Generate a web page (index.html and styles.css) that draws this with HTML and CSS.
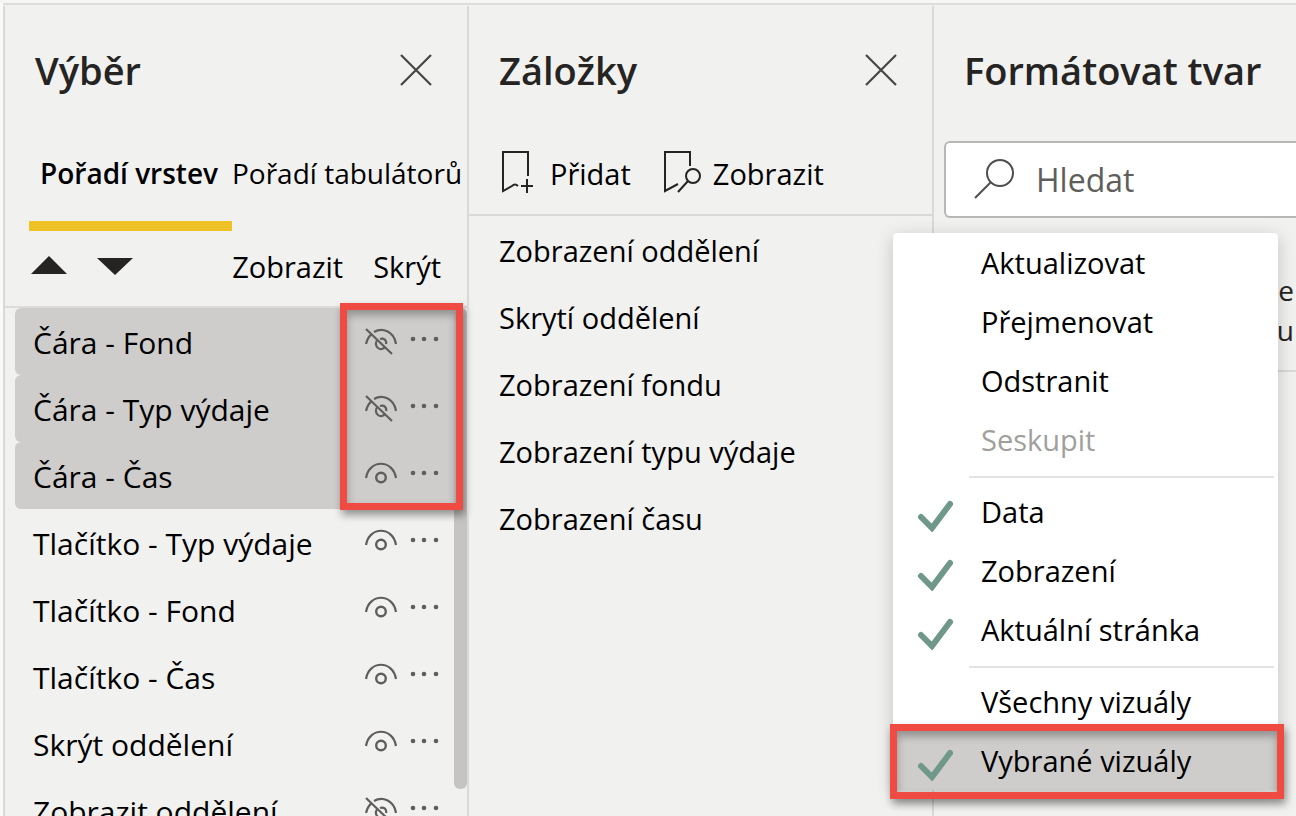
FILE: index.html
```html
<!DOCTYPE html>
<html lang="cs">
<head>
    <meta charset="UTF-8">
    <meta name="viewport" content="width=device-width, initial-scale=1.0">
    <title>Výběr a záložky</title>
    <link rel="stylesheet" href="styles.css">
</head>
<body>
    <!-- sdílené ikony -->
    <svg class="sprite" aria-hidden="true">
        <symbol id="close" viewBox="0 0 32 32">
            <path d="M1 1 31 31M31 1 1 31" fill="none" stroke="currentColor" stroke-width="2.2"/>
        </symbol>
        <symbol id="eye" viewBox="0 0 32 28">
            <path d="M1 16C4 -3 28 -3 31 16" fill="none" stroke="currentColor" stroke-width="2.2"/>
            <circle cx="16" cy="15.500" r="4.800" fill="none" stroke="currentColor" stroke-width="2.4"/>
        </symbol>
        <symbol id="eye-off" viewBox="0 0 32 28">
            <path d="M1 16C2 12 4 8 7 6M9 4C17 -1 29 3 31 16" fill="none" stroke="currentColor" stroke-width="2.2"/>
            <path d="M12.500 12C10 14 10.500 18 13 20S18.500 21 20 19M15 11C19 9.500 22 12.500 21 16" fill="none" stroke="currentColor" stroke-width="2.2"/>
            <path d="M1 1 27 26" fill="none" stroke="currentColor" stroke-width="2.2"/>
        </symbol>
        <symbol id="dots" viewBox="0 0 30 6">
            <circle cx="4" cy="3" r="2.3" fill="currentColor"/>
            <circle cx="15" cy="3" r="2.3" fill="currentColor"/>
            <circle cx="27" cy="3" r="2.3" fill="currentColor"/>
        </symbol>
        <symbol id="check" viewBox="0 0 36 32">
            <path d="M4 17 15 28 33 4" fill="none" stroke="currentColor" stroke-width="6" stroke-linecap="round"/>
        </symbol>
    </svg>

    <div class="workspace">
        <div class="canvas-edge"></div>

        <section class="panel">
            <header class="panel-header">
                <h2>Výběr</h2>
                <button type="button" class="icon-btn" aria-label="Zavřít"><svg class="icon-close"><use href="#close"/></svg></button>
            </header>
            <div class="tabs" role="tablist">
                <button type="button" role="tab" class="tab active" aria-selected="true">Pořadí vrstev</button>
                <button type="button" role="tab" class="tab" aria-selected="false">Pořadí tabulátorů</button>
            </div>
            <div class="layer-tools">
                <button type="button" class="icon-btn" aria-label="Nahoru"><svg class="icon-arrow" viewBox="0 0 36 20"><path d="M0 19 18 1 36 19Z"/></svg></button>
                <button type="button" class="icon-btn" aria-label="Dolů"><svg class="icon-arrow" viewBox="0 0 36 20"><path d="M0 3H36L18 20Z"/></svg></button>
                <button type="button" class="text-btn push">Zobrazit</button>
                <button type="button" class="text-btn">Skrýt</button>
            </div>
            <div class="layers">
                <ul class="layer-list">
                    <li class="layer selected"><span>Čára - Fond</span><button type="button" class="icon-btn" aria-label="Zobrazit"><svg class="icon-eye"><use href="#eye-off"/></svg></button><button type="button" class="icon-btn" aria-label="Další"><svg class="icon-dots"><use href="#dots"/></svg></button></li>
                    <li class="layer selected"><span>Čára - Typ výdaje</span><button type="button" class="icon-btn" aria-label="Zobrazit"><svg class="icon-eye"><use href="#eye-off"/></svg></button><button type="button" class="icon-btn" aria-label="Další"><svg class="icon-dots"><use href="#dots"/></svg></button></li>
                    <li class="layer selected"><span>Čára - Čas</span><button type="button" class="icon-btn" aria-label="Skrýt"><svg class="icon-eye"><use href="#eye"/></svg></button><button type="button" class="icon-btn" aria-label="Další"><svg class="icon-dots"><use href="#dots"/></svg></button></li>
                    <li class="layer"><span>Tlačítko - Typ výdaje</span><button type="button" class="icon-btn" aria-label="Skrýt"><svg class="icon-eye"><use href="#eye"/></svg></button><button type="button" class="icon-btn" aria-label="Další"><svg class="icon-dots"><use href="#dots"/></svg></button></li>
                    <li class="layer"><span>Tlačítko - Fond</span><button type="button" class="icon-btn" aria-label="Skrýt"><svg class="icon-eye"><use href="#eye"/></svg></button><button type="button" class="icon-btn" aria-label="Další"><svg class="icon-dots"><use href="#dots"/></svg></button></li>
                    <li class="layer"><span>Tlačítko - Čas</span><button type="button" class="icon-btn" aria-label="Skrýt"><svg class="icon-eye"><use href="#eye"/></svg></button><button type="button" class="icon-btn" aria-label="Další"><svg class="icon-dots"><use href="#dots"/></svg></button></li>
                    <li class="layer"><span>Skrýt oddělení</span><button type="button" class="icon-btn" aria-label="Skrýt"><svg class="icon-eye"><use href="#eye"/></svg></button><button type="button" class="icon-btn" aria-label="Další"><svg class="icon-dots"><use href="#dots"/></svg></button></li>
                    <li class="layer"><span>Zobrazit oddělení</span><button type="button" class="icon-btn" aria-label="Zobrazit"><svg class="icon-eye"><use href="#eye-off"/></svg></button><button type="button" class="icon-btn" aria-label="Další"><svg class="icon-dots"><use href="#dots"/></svg></button></li>
                </ul>
                <div class="scroll-thumb"></div>
                <div class="highlight highlight-eyes"></div>
            </div>
        </section>

        <section class="panel">
            <header class="panel-header">
                <h2>Záložky</h2>
                <button type="button" class="icon-btn" aria-label="Zavřít"><svg class="icon-close"><use href="#close"/></svg></button>
            </header>
            <div class="bookmark-tools">
                <button type="button" class="text-btn">
                    <svg class="icon-bookmark" viewBox="0 0 38 44"><path d="M28 26V2H3V41L12 36Q15 33 18 36M27 29V43M21 36H33"/></svg>
                    Přidat
                </button>
                <button type="button" class="text-btn">
                    <svg class="icon-bookmark" viewBox="0 0 38 44"><path d="M27 16V2H2V41L15 34M25 31 15 42"/><circle cx="30" cy="26" r="7"/></svg>
                    Zobrazit
                </button>
            </div>
            <ul class="bookmark-list">
                <li>Zobrazení oddělení</li>
                <li>Skrytí oddělení</li>
                <li>Zobrazení fondu</li>
                <li>Zobrazení typu výdaje</li>
                <li>Zobrazení času</li>
            </ul>
        </section>

        <section class="panel format-panel">
            <header class="panel-header">
                <h2>Formátovat tvar</h2>
            </header>
            <label class="search">
                <svg class="icon-search" viewBox="0 0 42 42"><circle cx="26" cy="14" r="13"/><path d="M17 23 1 39"/></svg>
                <input type="text" placeholder="Hledat" aria-label="Hledat">
            </label>
            <p class="format-hint">e<br>u</p>

            <div class="menu" role="menu">
                <button type="button" role="menuitem">Aktualizovat</button>
                <button type="button" role="menuitem">Přejmenovat</button>
                <button type="button" role="menuitem">Odstranit</button>
                <button type="button" role="menuitem" disabled>Seskupit</button>
                <hr>
                <button type="button" role="menuitemcheckbox" aria-checked="true"><svg class="icon-check"><use href="#check"/></svg>Data</button>
                <button type="button" role="menuitemcheckbox" aria-checked="true"><svg class="icon-check"><use href="#check"/></svg>Zobrazení</button>
                <button type="button" role="menuitemcheckbox" aria-checked="true"><svg class="icon-check"><use href="#check"/></svg>Aktuální stránka</button>
                <hr>
                <button type="button" role="menuitemradio" aria-checked="false">Všechny vizuály</button>
                <button type="button" role="menuitemradio" aria-checked="true" class="current"><svg class="icon-check"><use href="#check"/></svg>Vybrané vizuály</button>
                <div class="highlight highlight-item"></div>
            </div>
        </section>
    </div>
</body>
</html>
```
FILE: styles.css
```css
* {
    box-sizing: border-box;
}

body {
    margin: 0;
    height: 100vh;
    overflow: hidden;
    background-color: #f1f1ef;
    color: #000;
    font-family: "Segoe UI", "Open Sans", "Noto Sans", sans-serif;
    font-size: 29px;
    line-height: 40px;
}

h2, p, ul {
    margin: 0;
    padding: 0;
}

ul {
    list-style: none;
}

button {
    padding: 0;
    border: none;
    background: none;
    color: inherit;
    font: inherit;
    white-space: nowrap;
    cursor: pointer;
}

svg {
    display: block;
    flex: none;
}

.sprite {
    position: absolute;
    width: 0;
    height: 0;
}

.workspace {
    display: grid;
    grid-template-columns: 3px 464fr 465fr 364fr;
    height: 100%;
    border-top: 3px solid #f6f6f5;
    box-shadow: inset 0 2px 0 #dddddb;
}

.canvas-edge {
    background-color: #fafaf9;
}

.panel {
    position: relative;
    min-width: 0;
    padding-top: 27px;
    border-left: 2px solid #d9d9d7;
    margin-top: 3px;
}

.panel-header {
    display: flex;
    align-items: center;
    justify-content: space-between;
    height: 73px;
    padding: 0 35px 0 30px;
}

.panel-header h2 {
    color: #252423;
    font-size: 38px;
    font-weight: 600;
    line-height: 48px;
    white-space: nowrap;
}

.icon-close {
    width: 32px;
    height: 32px;
    color: #484644;
}

/* Výběr */

.tabs {
    display: flex;
    height: 125px;
    padding-left: 24px;
}

.tab {
    padding: 18px 0 0;
    border-bottom: 10px solid transparent;
    font-size: 28px;
}

.tab.active {
    padding: 18px 14px 0 11px;
    border-color: #efc228;
    font-weight: 600;
}

.layer-tools {
    display: flex;
    align-items: center;
    gap: 30px;
    height: 77px;
    padding: 0 26px 4px;
    border-bottom: 2px solid #dbdbd9;
}

.icon-arrow {
    width: 36px;
    height: 20px;
    margin-bottom: 4px;
    fill: #252423;
}

.push {
    margin-left: auto;
}

.layers {
    position: relative;
}

.layer-list {
    padding-left: 10px;
}

.layer {
    display: flex;
    align-items: center;
    height: 67px;
    padding: 0 28px 0 18px;
    border-radius: 6px;
    font-size: 30px;
}

.layer span {
    flex: 1;
    padding-top: 2px;
    white-space: nowrap;
}

.layer.selected {
    background-color: #cfcdcb;
}

.icon-eye {
    width: 32px;
    height: 28px;
    margin-right: 12px;
    color: #605e5c;
}

.icon-dots {
    width: 30px;
    height: 6px;
    margin-bottom: 6px;
    color: #605e5c;
}

.scroll-thumb {
    position: absolute;
    top: 0;
    right: 0;
    width: 13px;
    height: 481px;
    border-radius: 6px;
    background-color: #c5c4c2;
}

.highlight {
    position: absolute;
    border: 7px solid #ef4b43;
    box-shadow: 2px 5px 8px rgba(0,0,0,0.4), inset 0 5px 8px rgba(0,0,0,0.3);
    pointer-events: none;
}

.highlight-eyes {
    top: -5px;
    right: 4px;
    width: 123px;
    height: 207px;
}

/* Záložky */

.bookmark-tools {
    display: flex;
    align-items: center;
    gap: 32px;
    height: 110px;
    padding: 28px 31px 0;
    border-bottom: 2px solid #d9d9d7;
}

.bookmark-tools .text-btn {
    display: flex;
    align-items: center;
    gap: 12px;
}

.icon-bookmark {
    width: 38px;
    height: 44px;
    margin-bottom: 4px;
    fill: none;
    stroke: #252423;
    stroke-width: 2;
}

.bookmark-list {
    padding: 1px 30px;
}

.bookmark-list li {
    height: 67px;
    line-height: 67px;
    white-space: nowrap;
}

/* Formátovat tvar */

.search {
    display: flex;
    align-items: center;
    gap: 20px;
    height: 77px;
    margin: 35px 0 0 10px;
    padding-left: 28px;
    border: 2px solid #b8b7b5;
    border-right: none;
    border-radius: 6px 0 0 6px;
    background-color: #fff;
}

.search input {
    flex: 1;
    min-width: 0;
    padding: 0;
    border: none;
    outline: none;
    background: none;
    font: inherit;
    font-size: 32px;
}

.search input::placeholder {
    color: #605e5c;
    opacity: 1;
}

.icon-search {
    width: 42px;
    height: 42px;
    fill: none;
    stroke: #504e4c;
    stroke-width: 2;
}

.format-hint {
    height: 154px;
    padding: 52px 2px 0 0;
    border-bottom: 2px solid #d9d9d7;
    color: #252423;
    font-size: 28px;
    text-align: right;
}

.menu {
    position: absolute;
    top: 227px;
    left: -41px;
    right: 18px;
    border-radius: 4px;
    background-color: #fff;
    box-shadow: 0 4px 18px rgba(0,0,0,0.2);
}

.menu button {
    display: flex;
    align-items: center;
    width: 100%;
    height: 59px;
    padding-left: 88px;
}

.menu button[aria-checked="true"] {
    gap: 28px;
    padding-left: 24px;
}

.menu button:disabled {
    color: #a19f9d;
}

.menu button.current {
    background-color: #cfcdcb;
}

.menu hr {
    margin: 7px 4px 4px 76px;
    border: none;
    border-top: 2px solid #e3e3e2;
}

.icon-check {
    width: 36px;
    height: 32px;
    margin-top: 8px;
    color: #6f978a;
}

.highlight-item {
    right: -6px;
    bottom: -9px;
    left: -3px;
    height: 75px;
}
```
